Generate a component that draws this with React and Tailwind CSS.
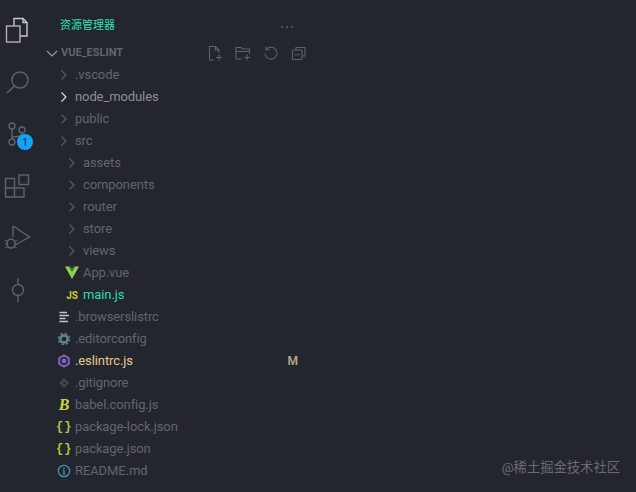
import React from "react";

const muted = "#5f626c";

const ActivityIcon = ({ children }) => (
  <svg width="48" height="52" viewBox="0 0 48 52" fill="none" stroke={muted} strokeWidth="1.4">
    {children}
  </svg>
);

const Chevron = ({ color = "#5c5f69" }) => (
  <svg width="16" height="22" viewBox="0 0 16 22" fill="none" stroke={color} strokeWidth="1.1">
    <path d="M5.5 6.5L10 11L5.5 15.5" />
  </svg>
);

const FileGlyph = ({ children }) => (
  <svg width="16" height="22" viewBox="0 0 16 22" fill="none">
    {children}
  </svg>
);

const icons = {
  folder: <Chevron />,
  open: <Chevron color="#e4e5e8" />,
  vue: (
    <FileGlyph>
      <path d="M1 4.5H5L8 9.5L11 4.5H15L8 17Z" fill="#8fd14f" />
      <path d="M5 4.5H6.8L8 6.7L9.2 4.5H11L8 9.5Z" fill="#4d7a3a" />
    </FileGlyph>
  ),
  js: <span className="w-4 text-center text-[10px] font-bold text-[#cbcb41]">JS</span>,
  list: (
    <FileGlyph>
      <path d="M3.5 6.5H11M3.5 9.5H13M3.5 12.5H9.5M3.5 15.5H12" stroke="#c4c6cc" strokeWidth="1.5" />
    </FileGlyph>
  ),
  gear: (
    <FileGlyph>
      <circle cx="8" cy="11" r="3.6" stroke="#66808c" strokeWidth="2.5" />
      <circle cx="8" cy="11" r="5.6" stroke="#66808c" strokeWidth="1.4" strokeDasharray="2.4 2" />
    </FileGlyph>
  ),
  eslint: (
    <FileGlyph>
      <path d="M8 4.2L13.8 7.5V14.5L8 17.8L2.2 14.5V7.5Z" fill="#8a5bbf" />
      <circle cx="8" cy="11" r="3.2" stroke="#23262e" strokeWidth="1.6" fill="#8a5bbf" />
    </FileGlyph>
  ),
  git: (
    <FileGlyph>
      <path d="M8 6L13 11L8 16L3 11Z" fill="#43464f" />
      <circle cx="8.5" cy="11" r="1.2" fill="#23262e" />
    </FileGlyph>
  ),
  babel: (
    <span className="w-4 text-center font-['Liberation_Serif',serif] text-[16px] font-bold italic leading-none text-[#cdd43f]">
      B
    </span>
  ),
  json: <span className="w-4 text-center font-['Liberation_Mono',monospace] text-[12px] font-bold tracking-[1px] text-[#b7c53d]">{"{}"}</span>,
  info: (
    <FileGlyph>
      <circle cx="8" cy="11" r="5.7" stroke="#3f94b5" strokeWidth="1.3" />
      <path d="M8 10V14M6.6 14H9.4M7 10H8" stroke="#3f94b5" strokeWidth="1.2" />
      <path d="M8 7.4V8.8" stroke="#3f94b5" strokeWidth="1.4" />
    </FileGlyph>
  ),
};

const rows = [
  { name: ".vscode", icon: "folder", indent: 1 },
  { name: "node_modules", icon: "open", indent: 1, color: "text-[#8b8e97]" },
  { name: "public", icon: "folder", indent: 1 },
  { name: "src", icon: "folder", indent: 1 },
  { name: "assets", icon: "folder", indent: 2 },
  { name: "components", icon: "folder", indent: 2 },
  { name: "router", icon: "folder", indent: 2 },
  { name: "store", icon: "folder", indent: 2 },
  { name: "views", icon: "folder", indent: 2 },
  { name: "App.vue", icon: "vue", indent: 2 },
  { name: "main.js", icon: "js", indent: 2, color: "text-[#2fd9ae]" },
  { name: ".browserslistrc", icon: "list", indent: 1 },
  { name: ".editorconfig", icon: "gear", indent: 1 },
  { name: ".eslintrc.js", icon: "eslint", indent: 1, color: "text-[#e6c98f]", badge: "M" },
  { name: ".gitignore", icon: "git", indent: 1 },
  { name: "babel.config.js", icon: "babel", indent: 1 },
  { name: "package-lock.json", icon: "json", indent: 1 },
  { name: "package.json", icon: "json", indent: 1 },
  { name: "README.md", icon: "info", indent: 1 },
];

const Row = ({ name, icon, indent, color, badge }) => (
  <div className={`flex h-[22px] items-center pr-[10px] ${indent === 2 ? "pl-4" : "pl-2"}`}>
    <span className="flex h-[22px] w-4 shrink-0 items-center">{icons[icon]}</span>
    <span className={`ml-[3px] flex-1 text-[13px] tracking-[-0.1px] ${color || "text-[#62656f]"}`}>{name}</span>
    {badge && <span className="text-xs font-semibold text-[#b9a57f]">{badge}</span>}
  </div>
);

const ActionIcon = ({ children }) => (
  <svg width="16" height="16" viewBox="0 0 16 16" fill="none" stroke={muted} strokeWidth="1.1">
    {children}
  </svg>
);

export default function App() {
  return (
    <div className="relative flex h-[492px] w-[636px] overflow-hidden bg-[#23262e] font-['Roboto','Noto_Sans_CJK_SC',sans-serif]">
      <div className="flex w-[48px] shrink-0 flex-col pt-1">
        <ActivityIcon>
          <path d="M14 22V14.5H23L27 18.5V32H20" stroke="#c6c7d0" />
          <path d="M23 14.5V18.5H27" stroke="#c6c7d0" />
          <rect x="6.5" y="22" width="13.5" height="16" stroke="#bfa9b4" />
        </ActivityIcon>
        <ActivityIcon>
          <circle cx="20" cy="24" r="8" />
          <path d="M14.5 30L7 37" strokeWidth="1.6" />
        </ActivityIcon>
        <div className="relative">
          <ActivityIcon>
            <circle cx="12" cy="18" r="3" />
            <circle cx="22" cy="22" r="3" />
            <circle cx="12" cy="34" r="3" />
            <path d="M12 21V31M12 29C17 29 22 28 22 25" />
          </ActivityIcon>
          <span className="absolute left-[17px] top-[26px] flex h-4 w-4 items-center justify-center rounded-full bg-[#12a5f4] text-[10px] text-[#12243a]">
            1
          </span>
        </div>
        <ActivityIcon>
          <rect x="19" y="15" width="9.5" height="9.5" />
          <path d="M5.5 18.5H14.5V37H5.5ZM5.5 28H24V37H14.5" />
        </ActivityIcon>
        <ActivityIcon>
          <path d="M13 14L29.5 25L15 33M13 14V25" />
          <ellipse cx="11" cy="31.5" rx="4" ry="4.5" />
          <path d="M5 28L8 30M5 32H7M5.5 36L8 34M17 28L14 30M17 32H15M16.5 36L14 34" strokeWidth="1.1" />
        </ActivityIcon>
        <ActivityIcon>
          <circle cx="18" cy="26" r="5.5" />
          <path d="M18 14V20.5M18 31.5V38" />
        </ActivityIcon>
      </div>

      <div className="flex w-[260px] shrink-0 flex-col pt-[2px]">
        <div className="flex h-[40px] items-center justify-between pl-[12px] pr-[14px] pt-[9px]">
          <span className="text-[11px] text-[#2ee0b0]">资源管理器</span>
          <svg width="14" height="4" viewBox="0 0 14 4" fill={muted}>
            <circle cx="2" cy="2" r="1" />
            <circle cx="7" cy="2" r="1" />
            <circle cx="12" cy="2" r="1" />
          </svg>
        </div>
        <div className="flex h-[22px] items-center">
          <svg width="12" height="22" viewBox="0 0 12 22" fill="none" stroke="#9a9ca4" strokeWidth="1.1" className="-ml-[2px] shrink-0">
            <path d="M1 9L6 14L11 9" />
          </svg>
          <span className="ml-[3px] flex-1 text-[11px] font-bold text-[#62656f]">VUE_ESLINT</span>
          <div className="flex items-center gap-3 pr-[1px]">
            <ActionIcon>
              <path d="M7 15H2.5V1.5H8.5L12 5V8M8.5 1.5V5H12M9 12.5H15M12 9.5V15.5" />
            </ActionIcon>
            <ActionIcon>
              <path d="M7 14H1V2.5H6L7.5 4H14.5V8.5M1 6.5H14.5M9 12.5H15M12 9.5V15.5" />
            </ActionIcon>
            <ActionIcon>
              <path d="M3.2 4.5A6 6 0 1 1 2 8.5M3 1.5V4.8H6.3" />
            </ActionIcon>
            <ActionIcon>
              <rect x="1.5" y="5" width="9.5" height="9.5" rx="1" />
              <path d="M5 5V2.5H14V11H11M3.5 9.7H9" />
            </ActionIcon>
          </div>
        </div>
        {rows.map((row) => (
          <Row key={row.name} {...row} />
        ))}
      </div>

      <span className="absolute bottom-[14px] right-[16px] text-[13.3px] text-[#6a6c73]">@稀土掘金技术社区</span>
    </div>
  );
}
